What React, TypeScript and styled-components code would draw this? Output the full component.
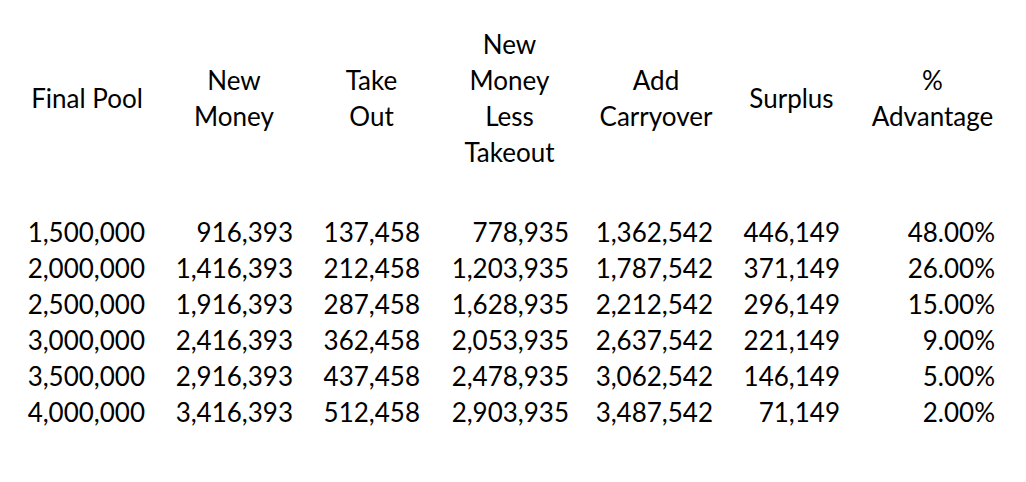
import React from "react";
import styled, { createGlobalStyle } from "styled-components";

const COLUMNS = "146px 148px 127px 149px 144px 127px 155px";

const headers = [
  ["Final Pool"],
  ["New", "Money"],
  ["Take", "Out"],
  ["New", "Money", "Less", "Takeout"],
  ["Add", "Carryover"],
  ["Surplus"],
  ["%", "Advantage"],
];

const rows = [
  ["1,500,000", "916,393", "137,458", "778,935", "1,362,542", "446,149", "48.00%"],
  ["2,000,000", "1,416,393", "212,458", "1,203,935", "1,787,542", "371,149", "26.00%"],
  ["2,500,000", "1,916,393", "287,458", "1,628,935", "2,212,542", "296,149", "15.00%"],
  ["3,000,000", "2,416,393", "362,458", "2,053,935", "2,637,542", "221,149", "9.00%"],
  ["3,500,000", "2,916,393", "437,458", "2,478,935", "3,062,542", "146,149", "5.00%"],
  ["4,000,000", "3,416,393", "512,458", "2,903,935", "3,487,542", "71,149", "2.00%"],
];

const App = () => {
  return (
    <>
      <GlobalStyle />
      <Sheet>
        <HeaderRow>
          {headers.map((lines, i) => (
            <HeaderCell key={i}>
              {lines.map((line) => (
                <div key={line}>{line}</div>
              ))}
            </HeaderCell>
          ))}
        </HeaderRow>
        <Body>
          {rows.map((row, r) => (
            <DataRow key={r}>
              {row.map((value, c) => (
                <NumCell key={c}>{value}</NumCell>
              ))}
            </DataRow>
          ))}
        </Body>
      </Sheet>
    </>
  );
};

export default App;

const GlobalStyle = createGlobalStyle`
  body {
    margin: 0;
    background: #ffffff;
  }
`;

const Sheet = styled.div`
  width: 1026px;
  height: 482px;
  padding: 26px 0 0 14px;
  box-sizing: border-box;
  font-family: Lato, "Open Sans", sans-serif;
  font-size: 26px;
  line-height: 36px;
  color: #000000;
`;

const HeaderRow = styled.div`
  display: grid;
  grid-template-columns: ${COLUMNS};
  height: 144px;
  align-items: center;
`;

const HeaderCell = styled.div`
  text-align: center;
`;

const Body = styled.div`
  margin-top: 44px;
  display: flex;
  flex-direction: column;
`;

const DataRow = styled.div`
  display: grid;
  grid-template-columns: ${COLUMNS};
  height: 36px;
  align-items: center;
`;

const NumCell = styled.div`
  text-align: right;
  padding-right: 15px;
  white-space: nowrap;
`;
